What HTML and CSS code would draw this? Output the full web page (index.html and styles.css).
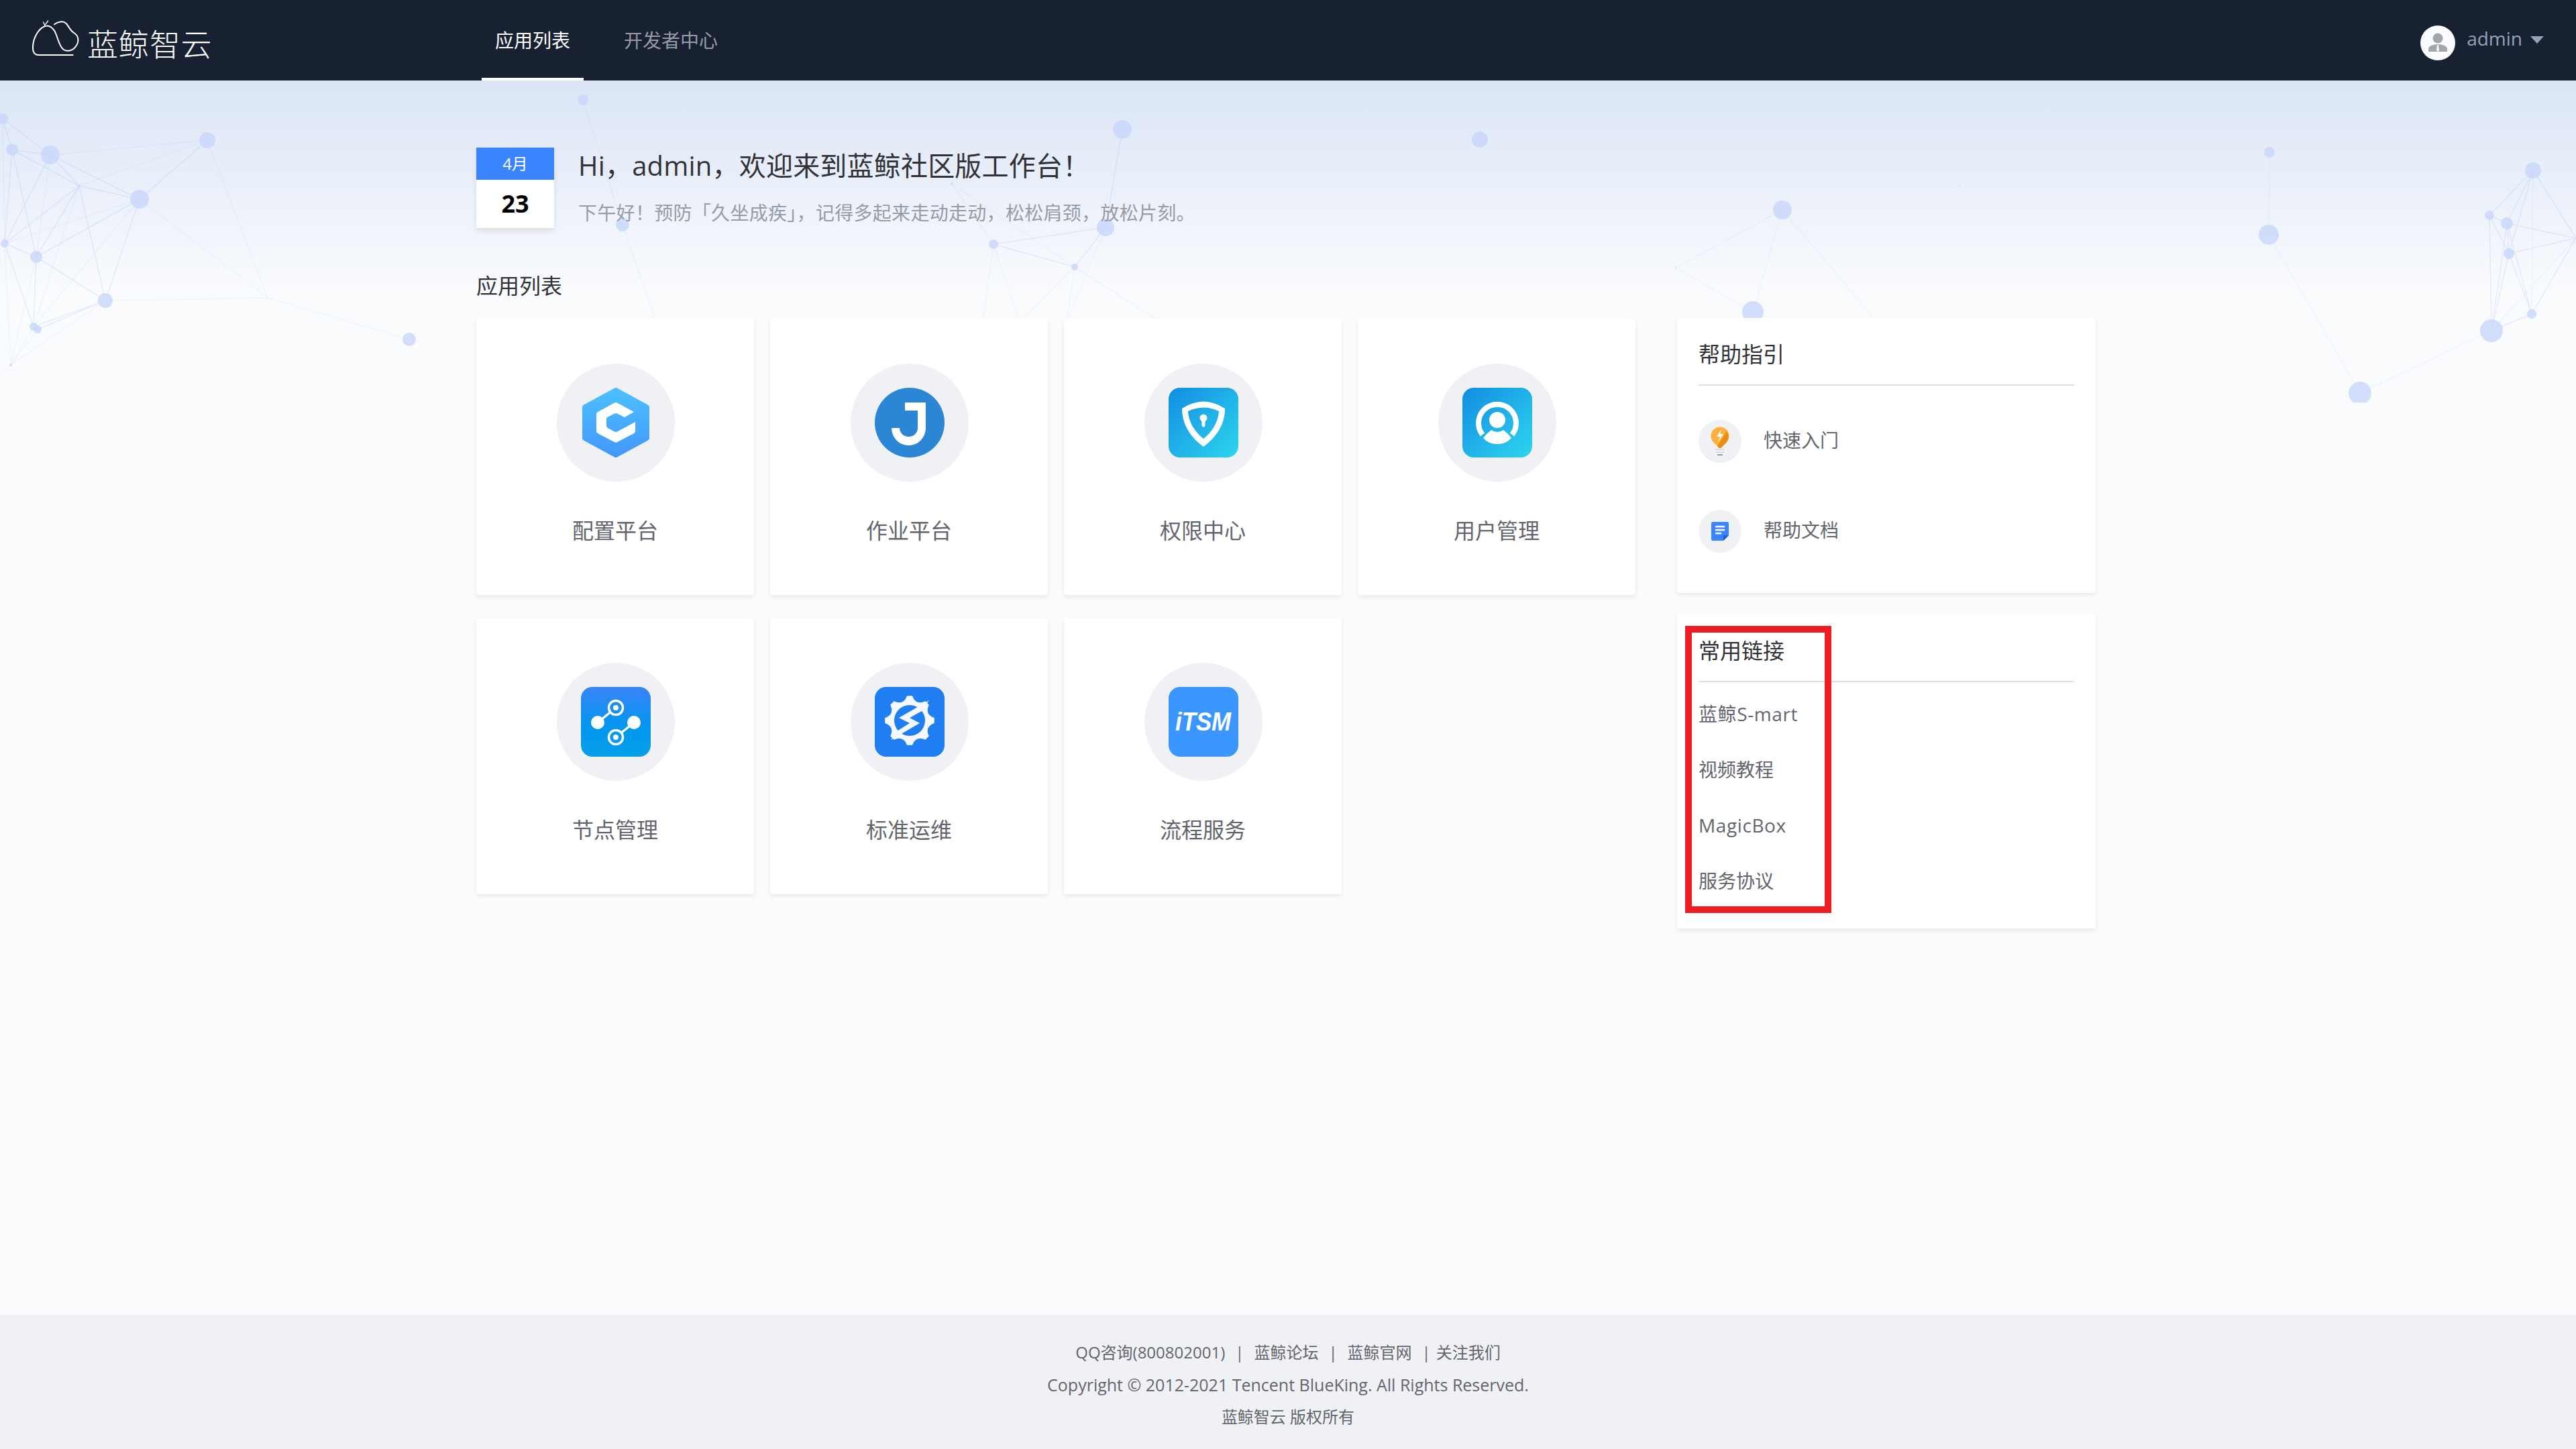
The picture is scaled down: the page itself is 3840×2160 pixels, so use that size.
FILE: index.html
```html
<!DOCTYPE html>
<html lang="zh-CN">
<head>
    <meta charset="UTF-8">
    <title>蓝鲸智云工作台</title>
    <link rel="stylesheet" href="styles.css">
</head>
<body>
    <header class="topbar">
        <div class="logo">
            <svg class="logo-mark" viewBox="50 35 240 192" fill="none" stroke="#fff" stroke-width="6" stroke-linecap="round" stroke-linejoin="round">
                <path d="M235 197H82C62 197 55 182 56 160C57 125 78 80 110 68C128 62 140 70 152 88C166 110 170 150 190 170C205 184 232 180 247 160C264 138 262 112 240 98C222 88 218 70 205 56C192 44 170 46 152 60"/>
                <path d="M110 66L103 50M112 60L124 44" stroke-width="4"/>
            </svg>
            <span class="logo-text">蓝鲸智云</span>
        </div>
        <nav class="nav">
            <a class="nav-item active">应用列表</a>
            <a class="nav-item">开发者中心</a>
        </nav>
        <div class="user">
            <svg class="avatar" viewBox="0 0 52 52">
                <circle cx="26" cy="26" r="26" fill="#fbfcfe"/>
                <circle cx="26" cy="19" r="7.500" fill="#a3a5ad"/>
                <path d="M12 39V35C12 31 18 28 26 28C34 28 40 31 40 35V39Z" fill="#a3a5ad"/>
                <path d="M25 29H27L28 37L26 39L24 37Z" fill="#fbfcfe"/>
            </svg>
            <span class="user-name">admin</span>
            <span class="caret"></span>
        </div>
    </header>

    <main class="main">
        <svg class="network" viewBox="0 120 3840 480">
            <g class="lines strong">
                <path d="M4 177L75 231M4 177L18 223M18 223L75 231M18 223L118 277M18 223L54 383M18 223L7 363M75 231L118 277M75 231L208 297M75 231L7 363M118 277L208 297M118 277L54 383M118 277L7 363M208 297L309 209M208 297L54 383M208 297L157 448M7 363L54 383M7 363L50 487M54 383L157 448M54 383L50 487M157 448L50 487M157 448L56 491M118 277L157 448"/>
                <path d="M3776 254L3711 321M3776 254L3737 333M3776 254L3740 378M3776 254L3840 355M3711 321L3737 333M3711 321L3740 378M3711 321L3714 493M3737 333L3840 355M3737 333L3740 378M3737 333L3714 493M3740 378L3714 493M3740 378L3774 468M3740 378L3840 355M3774 468L3714 493M3774 468L3840 355M3737 333L3774 468"/>
                <path d="M1648 339L1481 364M1481 364L1602 398M1602 398L1648 339M1673 193L1648 339"/>
            </g>
            <g class="lines faint">
                <path d="M4 177L7 363M75 231L309 209M75 231L54 383M309 209L75 231M309 209L118 277M208 297L7 363M208 297L50 487M208 297L399 444M309 209L399 444M157 448L399 444M399 444L610 506M7 363L16 544M50 487L16 544M56 491L16 544M157 448L16 544M118 277L50 487M54 383L16 544"/>
                <path d="M3776 254L3774 468M3714 493L3840 355M3714 493L3518 586M3518 586L3382 350M3382 350L3383 227"/>
                <path d="M869 149L928 335M928 335L978 480M1419 274L1602 398M1419 274L1481 364M1481 364L1465 480M1481 364L1520 480M1602 398L1520 480M1648 339L1590 480M1602 398L1730 480M1602 398L1590 480M2657 313L2613 465M2657 313L2498 399M2657 313L2790 470M2498 399L2613 465"/>
            </g>
            <g class="nodes">
                <circle cx="4" cy="177" r="8"/><circle cx="18" cy="223" r="9"/><circle cx="75" cy="231" r="14"/><circle cx="118" cy="277" r="2"/><circle cx="208" cy="297" r="14"/><circle cx="309" cy="209" r="12"/><circle cx="7" cy="363" r="6"/><circle cx="54" cy="383" r="9"/><circle cx="157" cy="448" r="11"/><circle cx="50" cy="487" r="6"/><circle cx="56" cy="491" r="6"/><circle cx="16" cy="544" r="2"/><circle cx="399" cy="444" r="1"/><circle cx="610" cy="506" r="10"/>
                <circle cx="869" cy="149" r="8"/><circle cx="928" cy="335" r="10"/><circle cx="1673" cy="193" r="14"/><circle cx="1419" cy="274" r="2"/><circle cx="1481" cy="364" r="7"/><circle cx="1648" cy="339" r="13"/><circle cx="1602" cy="398" r="5"/><circle cx="2206" cy="208" r="12"/><circle cx="2657" cy="313" r="14"/><circle cx="2613" cy="465" r="16"/><circle cx="2498" cy="399" r="1"/><circle cx="2921" cy="277" r="1"/>
                <circle cx="3383" cy="227" r="8"/><circle cx="3382" cy="350" r="15"/><circle cx="3518" cy="586" r="17"/><circle cx="3776" cy="254" r="12"/><circle cx="3711" cy="321" r="7"/><circle cx="3737" cy="333" r="9"/><circle cx="3740" cy="378" r="8"/><circle cx="3774" cy="468" r="7"/><circle cx="3714" cy="493" r="17"/>
            </g>
        </svg>

        <section class="hello">
            <div class="date">
                <div class="date-month">4月</div>
                <div class="date-day">23</div>
            </div>
            <div>
                <h1 class="hello-title">Hi，admin，欢迎来到蓝鲸社区版工作台！</h1>
                <p class="hello-sub">下午好！预防「久坐成疾」，记得多起来走动走动，松松肩颈，放松片刻。</p>
            </div>
        </section>

        <h2 class="section-title">应用列表</h2>

        <div class="content">
            <div class="apps">
                <a class="app">
                    <span class="app-circle">
                        <svg class="app-icon" viewBox="0 0 104 104">
                            <defs>
                                <linearGradient id="gc" x1="0" y1="0" x2="0" y2="1"><stop offset="0" stop-color="#4cc0ff"/><stop offset="1" stop-color="#4398fb"/></linearGradient>
                                <linearGradient id="gt" x1="0" y1="0" x2="1" y2="1"><stop offset="0" stop-color="#128ce2"/><stop offset="1" stop-color="#2dd6ee"/></linearGradient>
                                <linearGradient id="gn" x1="0" y1="0" x2="0" y2="1"><stop offset="0" stop-color="#3a84f6"/><stop offset=".6" stop-color="#0098f0"/><stop offset="1" stop-color="#069fe6"/></linearGradient>
                            </defs>
                            <path d="M52 4L98 29V75L52 100L6 75V29Z" fill="url(#gc)" stroke="url(#gc)" stroke-width="8" stroke-linejoin="round"/>
                            <path d="M79 36L54 22.500Q52 21.500 50 22.500L25 36Q23 37.500 23 39V65Q23 66.500 25 68L50 81Q52 82 54 81L79 68Q81 66.500 81 65V51L54 65.500Q52 66 50 65.500L40 60Q38 58.500 38 57V46Q38 44.500 40 43.500L50 38.500Q52 38 54 38.500L65 44Z" fill="#fff"/>
                        </svg>
                    </span>
                    <span class="app-name">配置平台</span>
                </a>
                <a class="app">
                    <span class="app-circle">
                        <svg class="app-icon" viewBox="0 0 104 104">
                            <circle cx="52" cy="52" r="52" fill="#2b87d6"/>
                            <path d="M45 22H76V60A25.500 26 0 0 1 25 60H37A13.500 13 0 0 0 64 60V34H45Z" fill="#fff"/>
                        </svg>
                    </span>
                    <span class="app-name">作业平台</span>
                </a>
                <a class="app">
                    <span class="app-circle">
                        <svg class="app-icon" viewBox="0 0 104 104">
                            <rect width="104" height="104" rx="17" fill="url(#gt)"/>
                            <path fill-rule="evenodd" d="M20 31Q52 10 84 31C84 58 68 76 52 88C36 76 20 58 20 31ZM29 35C30 52 40 67 52 76C64 67 74 52 75 35Q52 24 29 35Z" fill="#fff"/>
                            <circle cx="52" cy="45" r="5.500" fill="#fff"/>
                            <path d="M52 47V56" stroke="#fff" stroke-width="5" stroke-linecap="round"/>
                        </svg>
                    </span>
                    <span class="app-name">权限中心</span>
                </a>
                <a class="app">
                    <span class="app-circle">
                        <svg class="app-icon" viewBox="0 0 104 104">
                            <rect width="104" height="104" rx="17" fill="url(#gt)"/>
                            <path d="M30 70A28 28 0 1 1 74 70" fill="none" stroke="#fff" stroke-width="8"/>
                            <circle cx="52" cy="48" r="12" fill="#fff"/>
                            <path d="M43 63Q52 69 61 63Q68 68 73 75Q65 84 52 84Q39 84 31 75Q36 68 43 63Z" fill="#fff"/>
                        </svg>
                    </span>
                    <span class="app-name">用户管理</span>
                </a>
                <a class="app">
                    <span class="app-circle">
                        <svg class="app-icon" viewBox="0 0 104 104">
                            <rect width="104" height="104" rx="17" fill="url(#gn)"/>
                            <path d="M25 53L52 31M79 53L52 75" stroke="#fff" stroke-width="3.500"/>
                            <circle cx="25" cy="53" r="10" fill="#fff"/>
                            <circle cx="79" cy="53" r="10" fill="#fff"/>
                            <circle cx="52" cy="31" r="10.500" fill="#1a8ff2" stroke="#fff" stroke-width="3.500"/>
                            <circle cx="52" cy="31" r="4" fill="#fff"/>
                            <circle cx="52" cy="75" r="10.500" fill="#0a9aed" stroke="#fff" stroke-width="3.500"/>
                            <circle cx="52" cy="75" r="4" fill="#fff"/>
                        </svg>
                    </span>
                    <span class="app-name">节点管理</span>
                </a>
                <a class="app">
                    <span class="app-circle">
                        <svg class="app-icon" viewBox="0 0 104 104">
                            <rect width="104" height="104" rx="17" fill="#1e7ef2"/>
                            <path d="M88.800 46.100L88.800 53.900Q74.200 59.200 80.800 73.300L75.300 78.800Q61.200 72.200 55.900 86.800L48.100 86.800Q42.800 72.200 28.700 78.800L23.200 73.300Q29.800 59.200 15.200 53.900L15.200 46.100Q29.800 40.800 23.200 26.700L28.700 21.200Q42.800 27.800 48.100 13.200L55.900 13.200Q61.200 27.800 75.300 21.200L80.800 26.700Q74.200 40.800 88.800 46.100Z" fill="#f5f8fe"/>
                            <circle cx="52" cy="50" r="23" fill="#1e7ef2"/>
                            <path d="M81 20L36 46L52 54L33 66L24 79L67 54L52 46L70 36Z" fill="#f5f8fe"/>
                        </svg>
                    </span>
                    <span class="app-name">标准运维</span>
                </a>
                <a class="app">
                    <span class="app-circle">
                        <svg class="app-icon" viewBox="0 0 104 104">
                            <rect width="104" height="104" rx="17" fill="#3c96ff"/>
                            <text class="itsm" x="10" y="65" textLength="83" lengthAdjust="spacingAndGlyphs">iTSM</text>
                        </svg>
                    </span>
                    <span class="app-name">流程服务</span>
                </a>
            </div>

            <aside class="side">
                <div class="panel panel-help">
                    <h3 class="panel-title">帮助指引</h3>
                    <div class="help-list">
                        <a class="help-item">
                            <span class="help-circle">
                                <svg class="help-icon" viewBox="0 0 64 64">
                                    <path d="M23 34A13.500 13.500 0 1 1 41 34L33 42H31Z" fill="#fdb03c"/>
                                    <path d="M42 17A13.500 13.500 0 0 1 41 34L33 42H31L28 39Z" fill="#e98d10"/>
                                    <path d="M34 14L27 25H32L29 33L37 21H32Z" fill="#fff"/>
                                    <path d="M25 44H39M26 48H38" stroke="#d9dce3" stroke-width="2"/>
                                    <path d="M28 52H36" stroke="#979ba5" stroke-width="2"/>
                                </svg>
                            </span>
                            <span class="help-name">快速入门</span>
                        </a>
                        <a class="help-item">
                            <span class="help-circle">
                                <svg class="help-icon" viewBox="0 0 64 64">
                                    <path d="M21 18H43Q45 18 45 20V38L37 46H21Q19 46 19 44V20Q19 18 21 18Z" fill="#3a84ff"/>
                                    <path d="M45 38H37V46Z" fill="#1a5fd8"/>
                                    <path d="M25 25H39M25 30H39M25 35H34" stroke="#fff" stroke-width="2.500"/>
                                </svg>
                            </span>
                            <span class="help-name">帮助文档</span>
                        </a>
                    </div>
                </div>
                <div class="panel panel-links">
                    <h3 class="panel-title">常用链接</h3>
                    <ul class="link-list">
                        <li class="latin">蓝鲸S-mart</li>
                        <li>视频教程</li>
                        <li class="latin">MagicBox</li>
                        <li>服务协议</li>
                    </ul>
                    <div class="red-frame"></div>
                </div>
            </aside>
        </div>
    </main>

    <footer class="footer">
        <div class="footer-links">
            <span>QQ咨询(800802001)</span><span class="sep">|</span><span>蓝鲸论坛</span><span class="sep">|</span><span>蓝鲸官网</span><span class="sep last">|</span><span>关注我们</span>
        </div>
        <div class="footer-copy">Copyright © 2012-2021 Tencent BlueKing. All Rights Reserved.</div>
        <div>蓝鲸智云 版权所有</div>
    </footer>
</body>
</html>
```

FILE: styles.css
```css
* {
    box-sizing: border-box;
}

html, body {
    margin: 0;
    height: 100%;
}

body {
    display: flex;
    flex-direction: column;
    min-height: 2160px;
    background: #fafbfd;
    color: #63656e;
    font-family: "Open Sans", "Noto Sans CJK SC", sans-serif;
}

/* top bar */
.topbar {
    display: flex;
    align-items: stretch;
    flex: none;
    height: 120px;
    padding-left: 47px;
    padding-right: 48px;
    background: #182132;
}

.logo {
    display: flex;
    align-items: center;
    width: 671px;
}

.logo-mark {
    width: 80px;
    height: 64px;
    margin-right: 3px;
}

.logo-text {
    color: #fff;
    font-family: "Noto Sans CJK SC", sans-serif;
    font-size: 46px;
    font-weight: 300;
    letter-spacing: 0.5px;
    line-height: 64px;
    margin-top: 6px;
}

.nav {
    display: flex;
    gap: 40px;
}

.nav-item {
    padding: 0 20px;
    color: #979ba5;
    font-size: 28px;
    line-height: 120px;
}

.nav-item.active {
    color: #fff;
    border-bottom: 4px solid #fff;
}

.user {
    display: flex;
    align-items: center;
    margin-left: auto;
}

.avatar {
    width: 52px;
    height: 52px;
    margin-top: 8px;
}

.user-name {
    margin-left: 17px;
    margin-top: -6px;
    color: #96a2b9;
    font-size: 28px;
}

.caret {
    width: 0;
    height: 0;
    margin-left: 12px;
    margin-top: -2px;
    border-left: 10px solid transparent;
    border-right: 10px solid transparent;
    border-top: 11px solid #96a2b9;
}

/* main area */
.main {
    position: relative;
    flex: 1;
    padding: 100px 0 0 710px;
    background: linear-gradient(#dbe5f6, #fafbfd 320px);
}

.network {
    position: absolute;
    top: 0;
    left: 0;
    width: 3840px;
    height: 480px;
    filter: blur(0.7px);
}

.lines path {
    fill: none;
    stroke: #3a6cff;
    stroke-width: 1.5;
}

.lines.strong path {
    opacity: 0.1;
}

.lines.faint path {
    opacity: 0.05;
}

.nodes circle {
    fill: #c9d6fb;
    opacity: 0.8;
}

.hello {
    position: relative;
    display: flex;
    gap: 36px;
}

.date {
    width: 116px;
    height: 120px;
    background: #fff;
    text-align: center;
    box-shadow: 0 4px 8px rgba(0, 0, 0, 0.1);
}

.date-month {
    height: 48px;
    background: #3a84ff;
    color: #fff;
    font-size: 24px;
    line-height: 48px;
}

.date-day {
    color: #000;
    font-size: 36px;
    font-weight: 700;
    line-height: 72px;
}

.hello-title {
    margin: 0;
    color: #313238;
    font-size: 40px;
    font-weight: 400;
    letter-spacing: 0.2px;
    line-height: 54px;
}

.hello-sub {
    margin: 23px 0 0;
    color: #979ba5;
    font-size: 28px;
    letter-spacing: 0.3px;
    line-height: 40px;
}

.section-title {
    position: relative;
    margin: 62px 0 25px;
    color: #313238;
    font-size: 32px;
    font-weight: 400;
    line-height: 48px;
}

.content {
    position: relative;
    display: flex;
    align-items: flex-start;
    gap: 62px;
}

.apps {
    display: grid;
    grid-template-columns: repeat(4, 414px);
    grid-auto-rows: 412px;
    column-gap: 24px;
    row-gap: 34px;
}

.app {
    display: flex;
    flex-direction: column;
    align-items: center;
    padding-top: 67px;
    background: #fff;
    border-radius: 4px;
    box-shadow: 0 3px 6px rgba(0, 0, 0, 0.08);
}

.app-circle {
    display: flex;
    align-items: center;
    justify-content: center;
    width: 176px;
    height: 176px;
    margin-left: 2px;
    border-radius: 50%;
    background: #f0f1f5;
}

.app-icon {
    width: 104px;
    height: 104px;
}

.itsm {
    fill: #fff;
    font-family: "Liberation Sans", sans-serif;
    font-size: 38px;
    font-style: italic;
    font-weight: 700;
}

.app-name {
    margin-top: 49px;
    font-size: 32px;
    line-height: 48px;
}

/* right column */
.side {
    display: flex;
    flex-direction: column;
    gap: 32px;
    width: 624px;
    margin-top: -1px;
}

.panel {
    position: relative;
    padding: 0 32px;
    background: #fff;
    border-radius: 4px;
    box-shadow: 0 3px 6px rgba(0, 0, 0, 0.08);
}

.panel-title {
    margin: 0;
    padding: 30px 0 21px;
    border-bottom: 2px solid #dcdee5;
    color: #313238;
    font-size: 32px;
    font-weight: 400;
    line-height: 48px;
}

.help-list {
    display: flex;
    flex-direction: column;
    gap: 70px;
    padding: 51px 0 60px;
}

.help-item {
    display: flex;
    align-items: center;
    gap: 33px;
}

.help-circle {
    width: 64px;
    height: 64px;
    border-radius: 50%;
    background: #f0f1f5;
}

.help-icon {
    display: block;
    width: 64px;
    height: 64px;
}

.help-name {
    font-size: 28px;
    line-height: 40px;
    margin-top: -4px;
}

.link-list {
    margin: 0;
    padding: 6px 0 29px;
    list-style: none;
    font-size: 28px;
    line-height: 83px;
}

.link-list .latin {
    letter-spacing: 0.6px;
}

.red-frame {
    position: absolute;
    top: 17px;
    left: 12px;
    width: 218px;
    height: 428px;
    border: 10px solid #ed1c24;
}

/* footer */
.footer {
    flex: none;
    height: 200px;
    padding-top: 32px;
    background: #f0f1f5;
    font-size: 24px;
    line-height: 48px;
    text-align: center;
}

.footer-copy {
    font-size: 25px;
}

.sep {
    margin: 0 15px;
}

.sep.last {
    margin-right: 8px;
}
```
